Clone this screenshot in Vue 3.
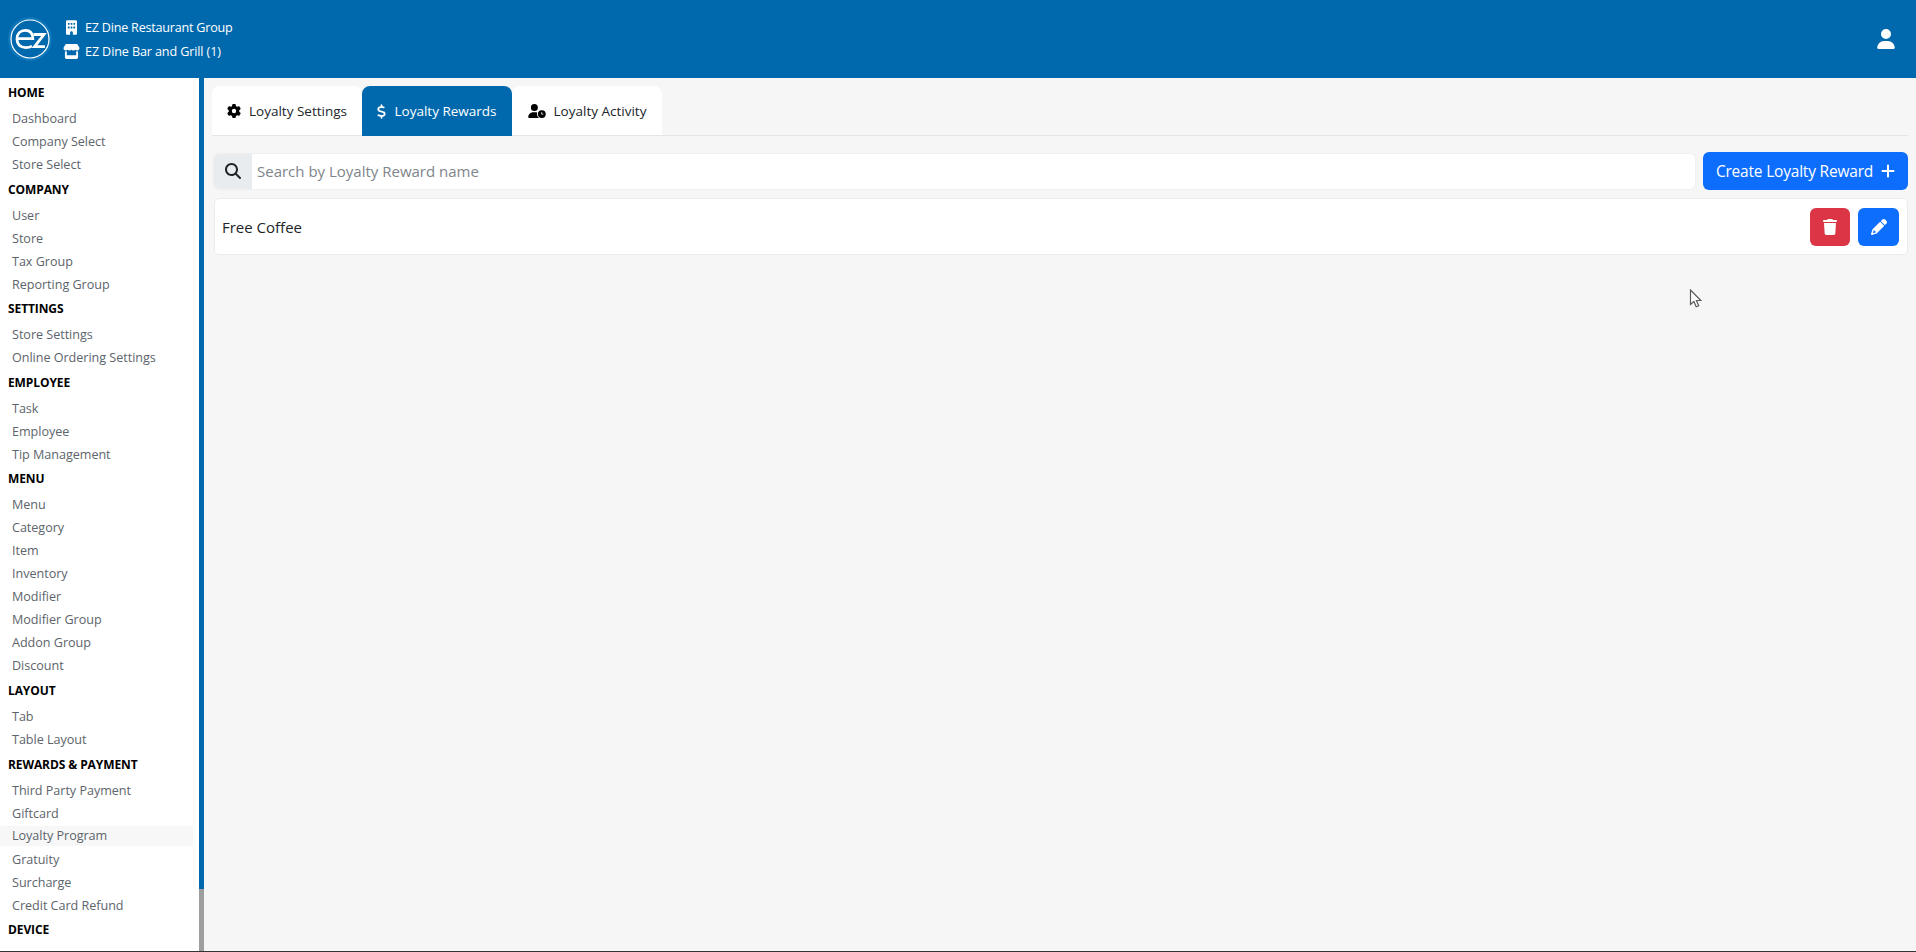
<script setup>
const groups = [
  { title: 'HOME', items: ['Dashboard', 'Company Select', 'Store Select'] },
  { title: 'COMPANY', items: ['User', 'Store', 'Tax Group', 'Reporting Group'] },
  { title: 'SETTINGS', items: ['Store Settings', 'Online Ordering Settings'] },
  { title: 'EMPLOYEE', items: ['Task', 'Employee', 'Tip Management'] },
  { title: 'MENU', items: ['Menu', 'Category', 'Item', 'Inventory', 'Modifier', 'Modifier Group', 'Addon Group', 'Discount'] },
  { title: 'LAYOUT', items: ['Tab', 'Table Layout'] },
  { title: 'REWARDS & PAYMENT', items: ['Third Party Payment', 'Giftcard', 'Loyalty Program', 'Gratuity', 'Surcharge', 'Credit Card Refund'] },
  { title: 'DEVICE', items: [] }
]
</script>

<template>
  <div class="page">
    <header class="topbar">
      <svg class="logo" viewBox="0 0 44 44" width="44" height="44">
        <circle cx="22" cy="22" r="22" fill="#0f78bb" />
        <circle cx="22" cy="22" r="19" fill="#0069ad" stroke="#fff" stroke-width="1.200" />
        <path d="M9.200 21.600H24.800C24.800 16.400 22 13.400 17.300 13.400C12.400 13.400 9 16.800 9 21.900C9 27.200 12.400 30.600 17.800 30.600C20.200 30.600 22.200 30.100 24 29.100" fill="none" stroke="#fff" stroke-width="2.800" />
        <path d="M25.500 17.500H36L26.500 29.700H37" fill="none" stroke="#fff" stroke-width="2.800" />
      </svg>
      <div class="org">
        <div class="org-line">
          <span class="org-icon">
            <svg viewBox="0 0 384 512" width="11" height="15"><path fill="#fff" d="M48 0C21.500 0 0 21.500 0 48V464c0 26.500 21.500 48 48 48h96V432c0-26.500 21.500-48 48-48s48 21.500 48 48v80h96c26.500 0 48-21.500 48-48V48c0-26.500-21.500-48-48-48H48zM64 240c0-8.800 7.200-16 16-16h32c8.800 0 16 7.200 16 16v32c0 8.800-7.200 16-16 16H80c-8.800 0-16-7.200-16-16V240zm112-16h32c8.800 0 16 7.200 16 16v32c0 8.800-7.200 16-16 16H176c-8.800 0-16-7.200-16-16V240c0-8.800 7.200-16 16-16zm80 16c0-8.800 7.200-16 16-16h32c8.800 0 16 7.200 16 16v32c0 8.800-7.200 16-16 16H272c-8.800 0-16-7.200-16-16V240zM80 96h32c8.800 0 16 7.200 16 16v32c0 8.800-7.200 16-16 16H80c-8.800 0-16-7.200-16-16V112c0-8.800 7.200-16 16-16zm80 16c0-8.800 7.200-16 16-16h32c8.800 0 16 7.200 16 16v32c0 8.800-7.200 16-16 16H176c-8.800 0-16-7.200-16-16V112zM272 96h32c8.800 0 16 7.200 16 16v32c0 8.800-7.200 16-16 16H272c-8.800 0-16-7.200-16-16V112c0-8.800 7.200-16 16-16z"/></svg>
          </span>
          <span>EZ Dine Restaurant Group</span>
        </div>
        <div class="org-line">
          <span class="org-icon">
            <svg viewBox="0 0 576 512" width="17" height="15"><path fill="#fff" d="M547.600 103.800L490.300 13.100C485.200 5 476.100 0 466.400 0H109.600C99.900 0 90.800 5 85.700 13.100L28.300 103.800c-29.600 46.800-3.400 111.900 51.900 119.400c4 .5 8.100 .8 12.100 .8c26.100 0 49.300-11.400 65.200-29c15.900 17.600 39.100 29 65.200 29c26.100 0 49.300-11.400 65.200-29c15.900 17.600 39.100 29 65.200 29c26.200 0 49.300-11.400 65.200-29c16 17.600 39.100 29 65.200 29c4.100 0 8.100-.3 12.100-.8c55.500-7.400 81.800-72.500 52.100-119.400zM499.700 254.900l-.1 0c-5.300 .7-10.700 1.100-16.200 1.100c-12.400 0-24.300-1.900-35.400-5.300V384H128V250.600c-11.200 3.500-23.200 5.400-35.600 5.400c-5.500 0-11-.4-16.300-1.100l-.1 0c-4.100-.6-8.100-1.300-12-2.300V384v64c0 35.300 28.700 64 64 64H448c35.300 0 64-28.700 64-64V384 252.600c-4 1-8 1.800-12.300 2.300z"/></svg>
          </span>
          <span class="org-store">EZ Dine Bar and Grill (1)</span>
        </div>
      </div>
      <svg class="user" viewBox="0 0 448 512" width="18" height="20"><path fill="#fff" d="M224 256A128 128 0 1 0 224 0a128 128 0 1 0 0 256zm-45.700 48C79.800 304 0 383.800 0 482.300C0 498.700 13.300 512 29.700 512H418.300c16.400 0 29.700-13.300 29.700-29.700C448 383.800 368.200 304 269.700 304H178.300z"/></svg>
    </header>

    <div class="body">
      <aside class="sidebar">
        <nav class="nav">
          <section v-for="g in groups" :key="g.title" class="group">
            <h6 class="group-title">{{ g.title }}</h6>
            <a v-for="item in g.items" :key="item" class="nav-item" :class="{ hovered: item === 'Loyalty Program' }">{{ item }}</a>
          </section>
        </nav>
        <div class="scroll"><div class="thumb"></div></div>
      </aside>

      <main class="main">
        <div class="tabs">
          <div class="tab">
            <svg viewBox="0 0 512 512" width="14" height="14"><path fill="#000" d="M495.900 166.600c3.200 8.700 .5 18.400-6.400 24.600l-43.300 39.400c1.100 8.300 1.700 16.800 1.700 25.400s-.6 17.100-1.700 25.400l43.300 39.400c6.900 6.200 9.600 15.900 6.400 24.600c-4.400 11.900-9.700 23.300-15.800 34.300l-4.700 8.100c-6.600 11-14 21.400-22.100 31.200c-5.900 7.200-15.700 9.600-24.500 6.800l-55.700-17.700c-13.400 10.300-28.200 18.900-44 25.400l-12.500 57.100c-2 9.100-9 16.300-18.200 17.800c-13.800 2.300-28 3.500-42.500 3.500s-28.700-1.200-42.500-3.500c-9.200-1.500-16.200-8.700-18.200-17.800l-12.500-57.100c-15.800-6.500-30.600-15.100-44-25.400L83.100 425.900c-8.800 2.800-18.600 .3-24.500-6.800c-8.100-9.800-15.500-20.200-22.100-31.200l-4.700-8.100c-6.100-11-11.400-22.400-15.800-34.300c-3.200-8.700-.5-18.400 6.400-24.600l43.300-39.400C64.600 273.100 64 264.600 64 256s.6-17.100 1.700-25.400L22.400 191.200c-6.900-6.200-9.600-15.900-6.400-24.600c4.400-11.900 9.700-23.300 15.800-34.300l4.700-8.100c6.600-11 14-21.400 22.100-31.200c5.900-7.200 15.700-9.600 24.500-6.800l55.700 17.700c13.400-10.300 28.200-18.900 44-25.400l12.500-57.100c2-9.100 9-16.300 18.200-17.800C227.300 1.200 241.500 0 256 0s28.700 1.200 42.500 3.500c9.200 1.500 16.200 8.700 18.200 17.800l12.500 57.100c15.800 6.500 30.600 15.100 44 25.400l55.700-17.700c8.800-2.800 18.600-.3 24.500 6.800c8.100 9.800 15.500 20.200 22.100 31.200l4.700 8.100c6.100 11 11.400 22.400 15.800 34.300zM256 336a80 80 0 1 0 0-160 80 80 0 1 0 0 160z"/></svg>
            <span>Loyalty Settings</span>
          </div>
          <div class="tab active">
            <svg viewBox="0 0 320 512" width="9" height="15"><path fill="#fff" d="M160 0c17.700 0 32 14.300 32 32V67.700c1.600 .2 3.100 .4 4.700 .7c.4 .1 .7 .1 1.100 .2l48 8.800c17.400 3.200 28.900 19.900 25.700 37.200s-19.900 28.900-37.200 25.700l-47.500-8.700c-31.300-4.600-58.900-1.500-78.300 6.200s-27.200 18.300-29 28.100c-2 10.700-.5 16.700 1.200 20.400c1.800 3.900 5.500 8.300 12.800 13.200c16.300 10.700 41.300 17.700 73.700 26.300l2.900 .8c28.600 7.600 63.600 16.800 89.600 33.800c14.200 9.300 27.600 21.900 35.900 39.500c8.500 17.900 10.300 37.900 6.400 59.200c-6.900 38-33.100 63.400-65.600 76.700c-13.700 5.600-28.600 9.200-44.400 11V480c0 17.700-14.300 32-32 32s-32-14.300-32-32V445.100c-.4-.1-.9-.1-1.300-.2l-.2 0 0 0c-24.400-3.800-64.500-14.300-91.500-26.300c-16.100-7.200-23.400-26.100-16.200-42.200s26.100-23.400 42.200-16.200c20.900 9.300 55.300 18.500 75.200 21.600c31.900 4.700 58.200 2 76-5.300c16.900-6.900 24.600-16.900 26.800-28.900c1.900-10.600 .4-16.700-1.300-20.400c-1.900-4-5.600-8.400-13-13.300c-16.400-10.700-41.500-17.700-74-26.300l-2.800-.7 0 0C119.400 279.300 84.400 270 58.400 253c-14.200-9.300-27.500-22-35.800-39.600c-8.400-17.900-10.100-37.900-6.100-59.200C23.700 116 52.300 91.200 84.800 78.300c13.300-5.300 27.900-8.900 43.200-11V32c0-17.700 14.300-32 32-32z"/></svg>
            <span>Loyalty Rewards</span>
          </div>
          <div class="tab">
            <svg viewBox="0 0 640 512" width="18" height="14"><path fill="#000" d="M224 0a128 128 0 1 1 0 256A128 128 0 1 1 224 0zM178.300 304h91.400c20.600 0 40.400 3.500 58.800 9.900C323 331 320 349.100 320 368c0 59.500 29.500 112.100 74.800 144H29.700C13.300 512 0 498.700 0 482.300C0 383.800 79.800 304 178.300 304zM640 368a144 144 0 1 1-288 0 144 144 0 1 1 288 0zM496 288c-8.800 0-16 7.200-16 16v64c0 8.800 7.200 16 16 16h48c8.800 0 16-7.200 16-16s-7.200-16-16-16H512V304c0-8.800-7.200-16-16-16z"/></svg>
            <span>Loyalty Activity</span>
          </div>
        </div>

        <div class="search-row">
          <div class="search">
            <span class="search-icon">
              <svg viewBox="0 0 512 512" width="16" height="16"><path fill="#212529" d="M416 208c0 45.900-14.900 88.300-40 122.700L502.600 457.400c12.500 12.500 12.500 32.800 0 45.300s-32.800 12.500-45.300 0L330.700 376c-34.400 25.200-76.800 40-122.700 40C93.100 416 0 322.900 0 208S93.100 0 208 0S416 93.100 416 208zM208 352a144 144 0 1 0 0-288 144 144 0 1 0 0 288z"/></svg>
            </span>
            <input class="search-input" type="text" placeholder="Search by Loyalty Reward name" />
          </div>
          <button class="create">
            <span>Create Loyalty Reward</span>
            <svg viewBox="0 0 448 512" width="14" height="16"><path fill="#fff" d="M256 80c0-17.700-14.300-32-32-32s-32 14.300-32 32V224H48c-17.700 0-32 14.300-32 32s14.300 32 32 32H192V432c0 17.700 14.300 32 32 32s32-14.300 32-32V288H400c17.700 0 32-14.300 32-32s-14.300-32-32-32H256V80z"/></svg>
          </button>
        </div>

        <div class="card">
          <span class="card-name">Free Coffee</span>
          <div class="actions">
            <button class="icon-btn danger">
              <svg viewBox="0 0 448 512" width="14" height="16"><path fill="#fff" d="M135.200 17.700L128 32H32C14.300 32 0 46.300 0 64S14.300 96 32 96H416c17.700 0 32-14.300 32-32s-14.300-32-32-32H320l-7.200-14.300C307.400 6.800 296.300 0 284.200 0H163.800c-12.100 0-23.200 6.800-28.600 17.700zM416 128H32L53.200 467c1.600 25.300 22.600 45 47.900 45H346.900c25.300 0 46.300-19.700 47.900-45L416 128z"/></svg>
            </button>
            <button class="icon-btn primary">
              <svg viewBox="0 0 512 512" width="16" height="16"><path fill="#fff" d="M410.300 231l11.300-11.300-33.900-33.900-62.100-62.100L291.700 89.800l-11.300 11.300-22.600 22.600L58.600 322.900c-10.400 10.400-18 23.300-22.200 37.400L1 480.700c-2.500 8.400-.2 17.500 6.100 23.700s15.300 8.500 23.700 6.100l120.300-35.400c14.100-4.200 27-11.800 37.400-22.200L387.700 253.700 410.300 231zM160 399.400l-9.100 22.700c-4 3.100-8.500 5.400-13.300 6.900L59.400 452l23-78.100c1.400-4.900 3.800-9.400 6.900-13.300l22.700-9.100v32c0 8.800 7.200 16 16 16h32zM362.700 18.700L348.300 33.200 325.700 55.800 314.300 67.100l33.900 33.900 62.100 62.100 33.900 33.900 11.300-11.300 22.600-22.600 14.500-14.500c25-25 25-65.500 0-90.500L453.300 18.700c-25-25-65.500-25-90.500 0z"/></svg>
            </button>
          </div>
        </div>

        <svg class="cursor" viewBox="0 0 14 20" width="14" height="20"><path d="M1.500 1v14.500l3.400-3 2.300 5.300 2.500-1.100-2.300-5.200h4.400z" fill="#fff" stroke="#5a5a5a" stroke-width="1.200" /></svg>
      </main>
    </div>
  </div>
</template>

<style>
html, body { margin: 0; background: #f6f6f6; }
</style>

<style scoped>
.page {
  width: 1916px;
  height: 952px;
  display: flex;
  flex-direction: column;
  overflow: hidden;
  font-family: "Open Sans", "Noto Sans", sans-serif;
  background: #f6f6f6;
  border-bottom: 1px solid #333;
  box-sizing: border-box;
}
.topbar {
  height: 78px;
  flex: none;
  background: #0069ad;
  display: flex;
  align-items: center;
  padding: 0 21px 0 8px;
  color: #fff;
  box-sizing: border-box;
}
.logo { flex: none; }
.org {
  margin-left: 10px;
  display: flex;
  flex-direction: column;
  gap: 4px;
  font-size: 12.600px;
}
.org-line { display: flex; align-items: center; height: 20px; letter-spacing: -0.22px; }
.org-store { letter-spacing: -0.12px; }
.org-icon { width: 22px; display: flex; justify-content: center; margin-left: -2px; margin-right: 3px; }
.user { margin-left: auto; }
.body { flex: 1; display: flex; min-height: 0; }
.sidebar { width: 204px; flex: none; display: flex; background: #fff; }
.nav { flex: 1; overflow: hidden; padding-top: 3px; }
.group { margin-bottom: 1.600px; }
.group-title {
  margin: 0;
  padding-left: 8px;
  font-size: 12px;
  font-weight: 700;
  color: #000;
  height: 23px;
  line-height: 23px;
  letter-spacing: -0.1px;
}
.group-title + .nav-item { margin-top: 3px; }
.nav-item {
  display: block;
  height: 23px;
  line-height: 23px;
  padding-left: 12px;
  font-size: 12.600px;
  color: #5d646b;
  letter-spacing: -0.03px;
}
.nav-item.hovered {
  background: #f7f7f7;
  height: 20px;
  line-height: 20px;
  margin: 1.500px 6px 1.500px 0;
}
.scroll { width: 5px; background: #9d9ea0; flex: none; }
.thumb { height: 811px; background: #0069ad; }
.main {
  flex: 1;
  position: relative;
  padding: 8px 8px 0 8px;
  box-sizing: border-box;
  min-width: 0;
}
.tabs {
  display: flex;
  height: 50px;
  box-sizing: border-box;
  border-bottom: 1px solid #e3e5e8;
}
.tab {
  width: 150px;
  height: 49px;
  flex: none;
  box-sizing: border-box;
  background: #fff;
  border-radius: 8px 8px 0 0;
  display: flex;
  align-items: center;
  justify-content: center;
  gap: 8px;
  font-size: 13.500px;
  letter-spacing: 0;
  color: #212529;
}
.tab.active { background: #0069ad; color: #fff; height: 50px; }
.search-row {
  display: flex;
  gap: 8px;
  margin-top: 16px;
  padding-left: 2px;
  height: 38px;
  align-items: center;
}
.search {
  flex: 1;
  display: flex;
  height: 35px;
  background: #fff;
  border-radius: 5px;
  box-shadow: 0 0 2px #dfe1e4;
  overflow: hidden;
}
.search-icon {
  width: 38px;
  background: #e9ecef;
  display: flex;
  align-items: center;
  justify-content: center;
}
.search-input {
  flex: 1;
  border: none;
  outline: none;
  background: transparent;
  padding: 0 5px;
  font-family: inherit;
  font-size: 15px;
  letter-spacing: 0;
}
.search-input::placeholder { color: #7e858b; opacity: 1; }
.create {
  width: 205px;
  height: 38px;
  background: #0d6efd;
  border: none;
  border-radius: 6px;
  color: #fff;
  font-family: inherit;
  font-size: 15.500px;
  letter-spacing: -0.2px;
  display: flex;
  align-items: center;
  justify-content: center;
  gap: 8px;
  padding: 0;
}
.card {
  margin-top: 8px;
  margin-left: 2px;
  height: 57px;
  box-sizing: border-box;
  background: #fff;
  border: 1px solid #ebecee;
  border-radius: 5px;
  display: flex;
  align-items: center;
  justify-content: space-between;
  padding: 0 8px 0 7px;
}
.card-name { font-size: 15px; color: #212529; letter-spacing: 0; }
.actions { display: flex; gap: 8px; }
.icon-btn {
  width: 41px;
  height: 38px;
  border: none;
  border-radius: 6px;
  display: flex;
  align-items: center;
  justify-content: center;
  padding: 0;
}
.danger { background: #dc3545; width: 40px; }
.primary { background: #0d6efd; }
.cursor { position: absolute; left: 1485px; top: 211px; }
</style>
